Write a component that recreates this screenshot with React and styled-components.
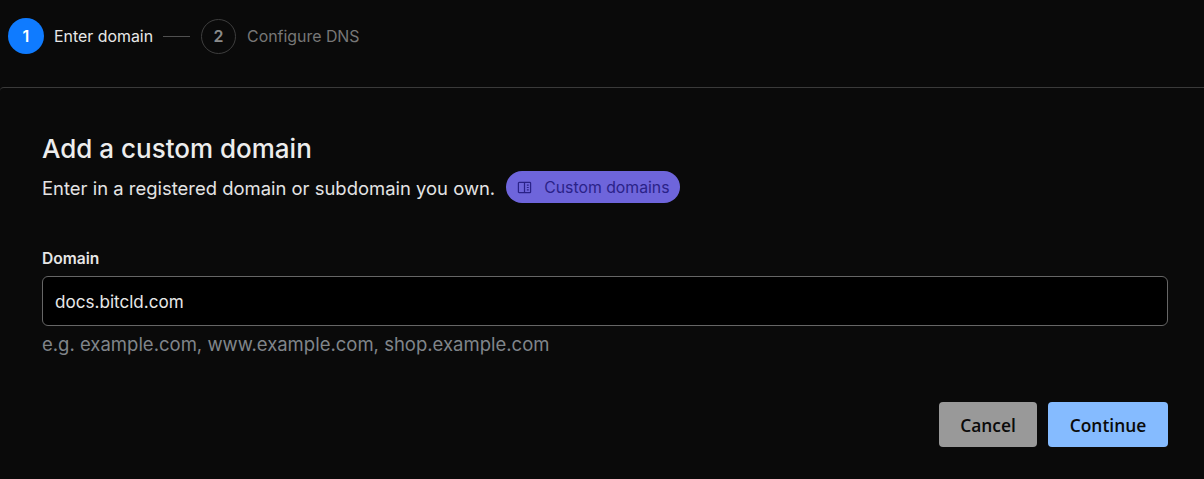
import React from "react";
import styled, { createGlobalStyle } from "styled-components";

const GlobalStyle = createGlobalStyle`
  html, body {
    margin: 0;
    padding: 0;
    height: 100%;
    background: #0a0a0a;
    overflow: hidden;
  }
  * {
    box-sizing: border-box;
  }
`;

const Page = styled.div`
  width: 1204px;
  height: 479px;
  background: #0a0a0a;
  font-family: Inter, "Liberation Sans", sans-serif;
  color: #ededed;
`;

const Stepper = styled.div`
  display: flex;
  align-items: center;
  height: 87px;
  padding: 0 0 15px 8px;
`;

const StepCircle = styled.div`
  display: flex;
  align-items: center;
  justify-content: center;
  width: ${(p) => (p.$active ? "36px" : "35px")};
  height: ${(p) => (p.$active ? "36px" : "35px")};
  border-radius: 50%;
  font-size: 16px;
  font-weight: 600;
  background: ${(p) => (p.$active ? "#0f7bff" : "transparent")};
  color: ${(p) => (p.$active ? "#fff" : "#8a8a8a")};
  border: ${(p) => (p.$active ? "none" : "1px solid #3e3e3e")};
`;

const StepLabel = styled.span`
  margin-left: ${(p) => (p.$active ? "10px" : "11px")};
  font-size: 15.9px;
  color: ${(p) => (p.$active ? "#e8e8e8" : "#777")};
`;

const StepLine = styled.div`
  width: 27px;
  height: 1px;
  margin: 0 11px 0 10px;
  background: #505050;
`;

const Content = styled.div`
  padding: 45px 36px 0 42px;
  border-top: 1px solid #3a3a3a;
  border-top-left-radius: 4px;
`;

const Title = styled.h1`
  margin: 0;
  font-size: 26px;
  line-height: 32px;
  font-weight: 500;
  color: #ededed;
`;

const Subtitle = styled.div`
  display: flex;
  align-items: center;
  margin-top: 7px;
  font-size: 18.45px;
  color: #e4e4e4;
`;

const Badge = styled.span`
  display: inline-flex;
  align-items: center;
  height: 32px;
  margin: -1px 0 1px 11px;
  padding: 0 10px 0 11px;
  border-radius: 16px;
  background: #6e65db;
  color: #2a2288;
  font-size: 15.8px;
  font-weight: 400;
`;

const BadgeIcon = styled.svg`
  width: 15px;
  height: 15px;
  margin-right: 12px;
`;

const Field = styled.div`
  margin-top: 46px;
`;

const Label = styled.label`
  display: block;
  font-size: 15.6px;
  line-height: 18px;
  font-weight: 600;
  color: #e6e6e6;
`;

const Input = styled.div`
  display: flex;
  align-items: center;
  height: 50px;
  margin-top: 8px;
  padding: 1px 12px 0;
  background: #000;
  border: 1px solid #666;
  border-radius: 6px;
  font-size: 17.1px;
  color: #e8e8e8;
`;

const Helper = styled.div`
  margin-top: 7px;
  font-size: 18.5px;
  line-height: 22px;
  color: #80858a;
`;

const Actions = styled.div`
  display: flex;
  justify-content: flex-end;
  gap: 11px;
  margin-top: 47px;
`;

const Button = styled.button`
  width: ${(p) => p.$width}px;
  height: 45px;
  padding: 0;
  border: none;
  border-radius: 4px;
  background: ${(p) => (p.$primary ? "#85bbff" : "#999")};
  color: #0a0a0a;
  font-family: "Open Sans", "Noto Sans", sans-serif;
  font-size: 17.4px;
  font-weight: 600;
`;

export default function App() {
  return (
    <Page>
      <GlobalStyle />
      <Stepper>
        <StepCircle $active>1</StepCircle>
        <StepLabel $active>Enter domain</StepLabel>
        <StepLine />
        <StepCircle>2</StepCircle>
        <StepLabel>Configure DNS</StepLabel>
      </Stepper>
      <Content>
        <Title>Add a custom domain</Title>
        <Subtitle>
          Enter in a registered domain or subdomain you own.
          <Badge>
            <BadgeIcon viewBox="0 0 16 16" fill="none" stroke="#2a2288" strokeWidth="1.3">
              <rect x="1.5" y="2.5" width="13" height="11" rx="0.8" />
              <path d="M8 2.5v11M10.5 5.5h2M10.5 8h2M10.5 10.5h2" />
            </BadgeIcon>
            Custom domains
          </Badge>
        </Subtitle>
        <Field>
          <Label>Domain</Label>
          <Input>docs.bitcld.com</Input>
          <Helper>e.g. example.com, www.example.com, shop.example.com</Helper>
        </Field>
        <Actions>
          <Button $width={98}>Cancel</Button>
          <Button $primary $width={120}>Continue</Button>
        </Actions>
      </Content>
    </Page>
  );
}
